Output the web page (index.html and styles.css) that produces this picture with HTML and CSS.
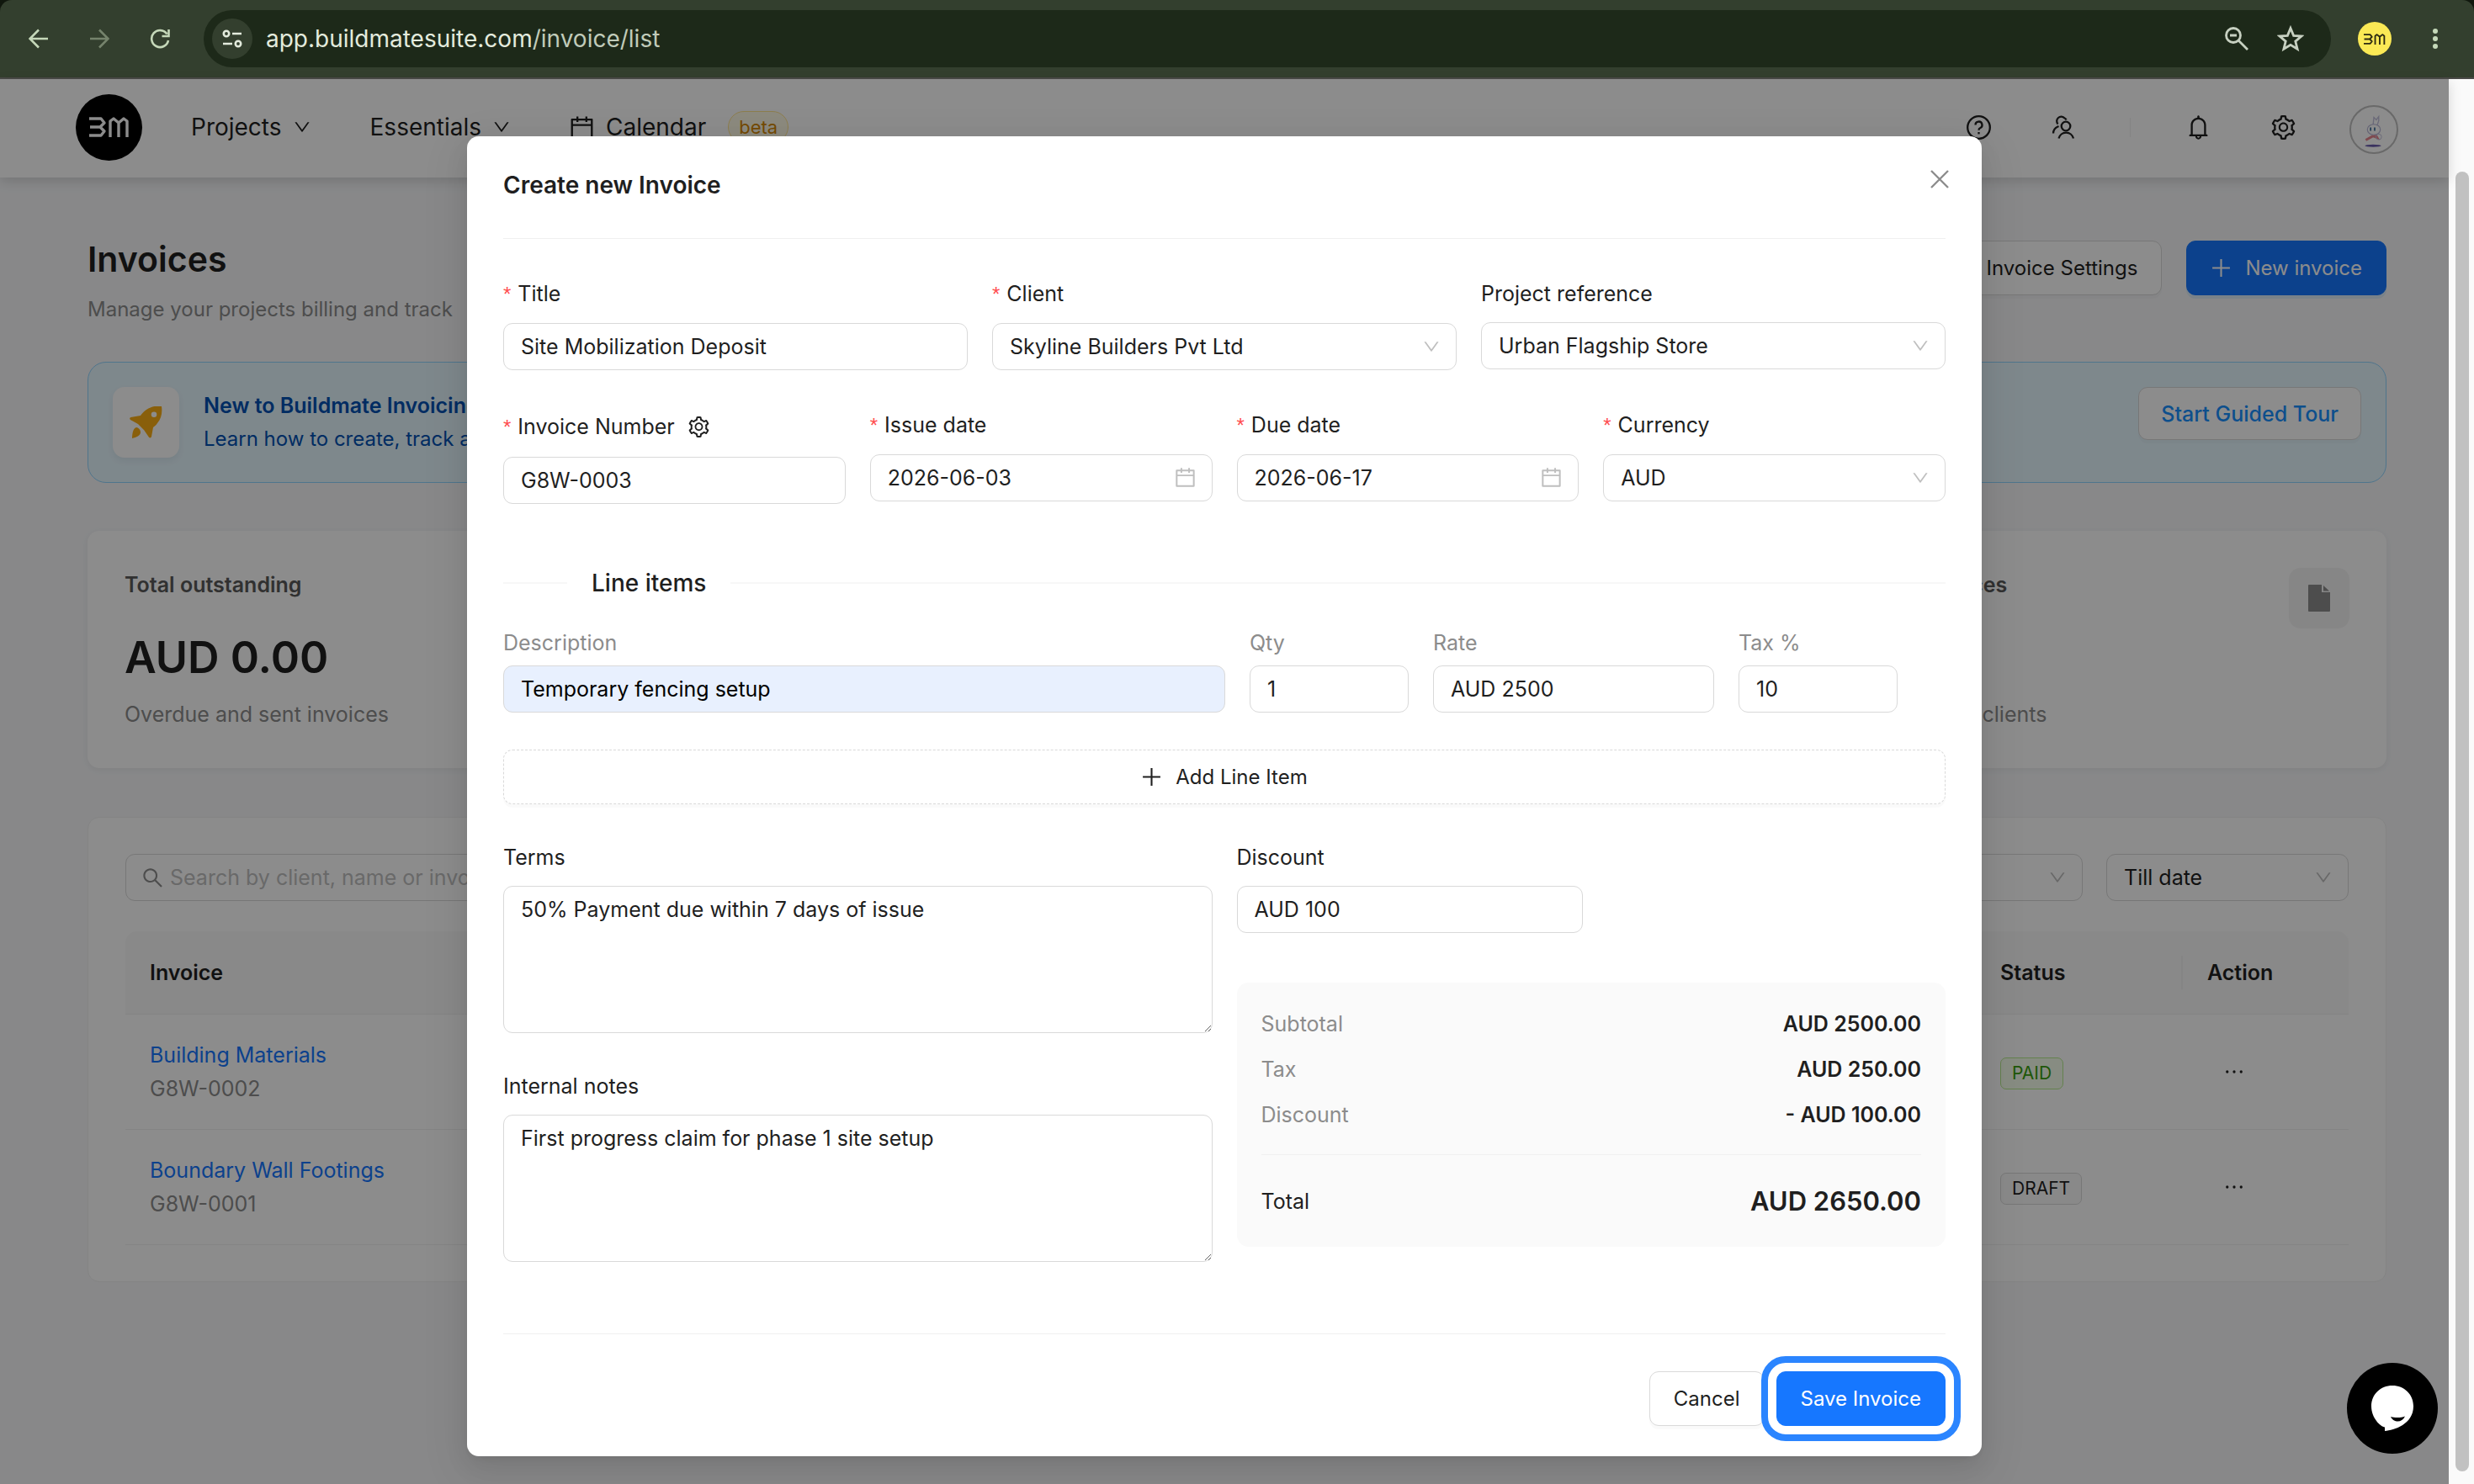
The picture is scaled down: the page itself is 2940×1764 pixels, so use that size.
FILE: index.html
```html
<!DOCTYPE html>
<html lang="en">
<head>
<meta charset="utf-8">
<meta name="viewport" content="width=device-width, initial-scale=1">
<title>Invoices - Buildmate</title>
<link rel="stylesheet" href="styles.css">
</head>
<body>
<svg class="sprite" aria-hidden="true">
  <defs>
    <symbol id="i-down" viewBox="64 64 896 896"><path d="M884 256h-75c-5.1 0-9.9 2.5-12.9 6.6L512 654.2 227.9 262.6c-3-4.1-7.8-6.6-12.9-6.6h-75c-6.5 0-10.3 7.4-6.5 12.7l352.6 486.1c12.8 17.6 39 17.6 51.7 0l352.6-486.1c3.9-5.3.1-12.7-6.4-12.7z"/></symbol>
    <symbol id="i-gear" viewBox="64 64 896 896"><path d="M924.8 625.7l-65.5-56c3.1-19 4.7-38.4 4.7-57.8s-1.6-38.8-4.7-57.8l65.5-56a32.03 32.03 0 009.3-35.2l-.9-2.6a443.74 443.74 0 00-79.7-137.9l-1.8-2.1a32.12 32.12 0 00-35.1-9.5l-81.3 28.9c-30-24.6-63.5-44-99.7-57.6l-15.7-85a32.05 32.05 0 00-25.8-25.7l-2.7-.5c-52.1-9.4-106.9-9.4-159 0l-2.7.5a32.05 32.05 0 00-25.8 25.7l-15.8 85.4a351.86 351.86 0 00-99 57.4l-81.9-29.1a32 32 0 00-35.1 9.5l-1.8 2.1a446.02 446.02 0 00-79.7 137.9l-.9 2.6c-4.5 12.5-.8 26.5 9.3 35.2l66.3 56.6c-3.1 18.8-4.6 38-4.6 57.1 0 19.2 1.5 38.4 4.6 57.1L99 625.5a32.03 32.03 0 00-9.3 35.2l.9 2.6c18.1 50.4 44.9 96.9 79.7 137.9l1.8 2.1a32.12 32.12 0 0035.1 9.5l81.9-29.1c29.8 24.5 63.1 43.9 99 57.4l15.8 85.4a32.05 32.05 0 0025.8 25.7l2.7.5a449.4 449.4 0 00159 0l2.7-.5a32.05 32.05 0 0025.8-25.7l15.7-85a350 350 0 0099.7-57.6l81.3 28.9a32 32 0 0035.1-9.5l1.8-2.1c34.8-41.1 61.6-87.5 79.7-137.9l.9-2.6c4.5-12.3.8-26.3-9.3-35zM788.3 465.9c2.5 15.1 3.8 30.6 3.8 46.1s-1.3 31-3.8 46.1l-6.6 40.1 74.7 63.9a370.03 370.03 0 01-42.6 73.6L721 702.8l-31.4 25.8c-23.9 19.6-50.5 35-79.3 45.8l-38.1 14.3-17.9 97a377.5 377.5 0 01-85 0l-17.9-97.2-37.8-14.5c-28.5-10.8-55-26.2-78.7-45.7l-31.4-25.9-93.4 33.2c-17-22.9-31.2-47.6-42.6-73.6l75.5-64.5-6.5-40c-2.4-14.9-3.7-30.3-3.7-45.5 0-15.3 1.2-30.6 3.7-45.5l6.5-40-75.5-64.5c11.3-26.1 25.6-50.7 42.6-73.6l93.4 33.2 31.4-25.9c23.7-19.5 50.2-34.9 78.7-45.7l37.9-14.3 17.9-97.2c28.1-3.2 56.8-3.2 85 0l17.9 97 38.1 14.3c28.7 10.8 55.4 26.2 79.3 45.8l31.4 25.8 92.8-32.9c17 22.9 31.2 47.6 42.6 73.6L781.8 426l6.5 39.9zM512 326c-97.2 0-176 78.8-176 176s78.8 176 176 176 176-78.8 176-176-78.8-176-176-176zm79.2 255.2A111.6 111.6 0 01512 614c-29.9 0-58-11.7-79.2-32.8A111.6 111.6 0 01400 502c0-29.9 11.7-58 32.8-79.2C454 401.6 482.1 390 512 390c29.9 0 58 11.6 79.2 32.8A111.6 111.6 0 01624 502c0 29.9-11.7 58-32.8 79.2z"/></symbol>
    <symbol id="i-calendar" viewBox="64 64 896 896"><path d="M880 184H712v-64c0-4.4-3.6-8-8-8h-56c-4.4 0-8 3.6-8 8v64H384v-64c0-4.4-3.6-8-8-8h-56c-4.4 0-8 3.6-8 8v64H144c-17.7 0-32 14.3-32 32v664c0 17.7 14.3 32 32 32h736c17.7 0 32-14.3 32-32V216c0-17.7-14.3-32-32-32zm-40 656H184V460h656v380zM184 392V256h128v48c0 4.4 3.6 8 8 8h56c4.4 0 8-3.6 8-8v-48h256v48c0 4.4 3.6 8 8 8h56c4.4 0 8-3.6 8-8v-48h128v136H184z"/></symbol>
    <symbol id="i-search" viewBox="64 64 896 896"><path d="M909.6 854.5L649.9 594.8C690.2 542.7 712 479 712 412c0-80.2-31.3-155.4-87.9-212.1-56.6-56.7-132-87.9-212.1-87.9s-155.5 31.3-212.1 87.9C143.2 256.5 112 331.8 112 412c0 80.1 31.3 155.5 87.9 212.1C256.5 680.8 331.8 712 412 712c67 0 130.6-21.8 182.7-62l259.7 259.6a8.2 8.2 0 0011.6 0l43.6-43.5a8.2 8.2 0 000-11.6zM570.4 570.4C528 612.7 471.8 636 412 636s-116-23.3-158.4-65.6C211.3 528 188 471.8 188 412s23.3-116.1 65.6-158.4C296 211.3 352.2 188 412 188s116.1 23.2 158.4 65.6S636 352.2 636 412s-23.3 116.1-65.6 158.4z"/></symbol>
    <symbol id="i-bell" viewBox="64 64 896 896"><path d="M816 768h-24V428c0-141.1-104.3-257.8-240-277.2V112c0-22.1-17.9-40-40-40s-40 17.9-40 40v38.8C336.3 170.2 232 286.9 232 428v340h-24c-17.7 0-32 14.3-32 32v32c0 4.4 3.6 8 8 8h216c0 61.8 50.2 112 112 112s112-50.2 112-112h216c4.4 0 8-3.6 8-8v-32c0-17.7-14.3-32-32-32zM512 888c-26.5 0-48-21.5-48-48h96c0 26.5-21.5 48-48 48zM304 768V428c0-55.6 21.6-107.8 60.9-147.1S456.4 220 512 220c55.6 0 107.8 21.6 147.1 60.9S720 372.4 720 428v340H304z"/></symbol>
    <symbol id="i-plus" viewBox="0 0 24 24"><path d="M11 2h2v20h-2zM2 11h20v2H2z"/></symbol>
    <symbol id="i-dots" viewBox="0 0 24 24"><circle cx="3" cy="12" r="1.8"/><circle cx="12" cy="12" r="1.8"/><circle cx="21" cy="12" r="1.8"/></symbol>
    <symbol id="i-mark" viewBox="0 0 48 24"><g fill="none" stroke="currentColor" stroke-width="3.4" stroke-linejoin="round"><path d="M0 2h14l4 5-5 5H1M13 12l5 5-4 5H0"/><path d="M25 24V5l4-3 6 5 6-5 4 3v19M35 7v17"/></g></symbol>
  </defs>
</svg>

<div class="browser">
  <header class="toolbar">
    <button class="tool" type="button" aria-label="Back"><svg class="tool-icon" viewBox="0 0 24 24"><path d="M23 12H2M12 1.500L1.500 12 12 22.500"/></svg></button>
    <button class="tool tool-off" type="button" aria-label="Forward"><svg class="tool-icon" viewBox="0 0 24 24"><path d="M1 12h21M12 1.500L22.500 12 12 22.500"/></svg></button>
    <button class="tool" type="button" aria-label="Reload"><svg class="tool-icon" viewBox="0 0 24 24"><path d="M20.500 6.500A10 10 0 1 0 22 14M22.500 1v8h-8"/></svg></button>
    <div class="address">
      <button class="site-info" type="button" aria-label="Site information"><svg class="tool-icon" viewBox="0 0 24 24"><circle cx="5" cy="6" r="3.200"/><path d="M12 6h11M1 18h11"/><circle cx="19" cy="18" r="3.200"/></svg></button>
      <span class="url">app.buildmatesuite.com<span class="url-path">/invoice/list</span></span>
      <button class="tool tool-pale" type="button" aria-label="Zoom"><svg class="zoom-icon" viewBox="0 0 28 28"><circle cx="10" cy="10" r="8.500"/><path d="M16 16l11 11M6 10h8"/></svg></button>
      <button class="tool tool-pale" type="button" aria-label="Bookmark"><svg class="star-icon" viewBox="0 0 32 32"><path d="M16 3.500l3.600 8.800 9.400.7-7.200 6.100 2.300 9.200L16 23.300l-8.100 5 2.300-9.200L3 13l9.400-.7z"/></svg></button>
    </div>
    <button class="profile" type="button" aria-label="Profile"><svg class="profile-mark"><use href="#i-mark"/></svg></button>
    <button class="tool" type="button" aria-label="Menu"><svg class="menu-icon" viewBox="0 0 8 24"><circle cx="4" cy="3" r="3"/><circle cx="4" cy="12" r="3"/><circle cx="4" cy="21" r="3"/></svg></button>
  </header>

  <div class="window">
    <div class="page">
      <header class="site-header">
        <a class="logo" href="#" aria-label="Buildmate"><svg class="logo-mark"><use href="#i-mark"/></svg></a>
        <nav class="nav">
          <a class="nav-link" href="#">Projects <svg class="nav-down"><use href="#i-down"/></svg></a>
          <a class="nav-link" href="#">Essentials <svg class="nav-down"><use href="#i-down"/></svg></a>
          <a class="nav-link" href="#"><svg class="nav-calendar"><use href="#i-calendar"/></svg> Calendar <span class="beta">beta</span></a>
        </nav>
        <div class="header-tools">
          <button class="header-button" type="button" aria-label="Help"><svg class="icon-29 stroked" viewBox="0 0 29 29"><circle cx="14.500" cy="14.500" r="13.300"/><path d="M10.500 11.500a4 4 0 1 1 5.500 3.700c-1.200.5-1.500 1-1.500 2.500"/><path d="M14.500 20v2.400"/></svg></button>
          <button class="header-button" type="button" aria-label="Contacts"><svg class="icon-29 stroked" viewBox="0 0 29 29"><circle cx="17" cy="13" r="5.300"/><path d="M8.500 27.500a9 9 0 0 1 17.500 0M15.500 3.500A5.300 5.300 0 1 0 7.500 10.500M7.500 13.500a9 9 0 0 0-5.500 8M8.500 13l-1 .5M15.500 3.500c1 .5 1.500 1 2 2"/></svg></button>
          <span class="header-rule"></span>
          <button class="header-button" type="button" aria-label="Notifications"><svg class="icon-29"><use href="#i-bell"/></svg></button>
          <button class="header-button" type="button" aria-label="Settings"><svg class="icon-29"><use href="#i-gear"/></svg></button>
          <button class="avatar" type="button" aria-label="Account"><svg class="avatar-art" viewBox="0 0 56 56"><path d="M27 23l1-10 3 3 3-4v5l-2 6" fill="#fff" stroke="#c3c1dc" stroke-width="1.400"/><path d="M18 41l9-5 5 2-3-5" fill="none" stroke="#e8868f" stroke-width="3"/><ellipse cx="28" cy="28" rx="8" ry="6.500" fill="#fff" stroke="#b9b7d6" stroke-width="1.200"/><circle cx="34" cy="37" r="3.500" fill="none" stroke="#c3c1dc"/><path d="M24 25.500v4M29 25.500v4" stroke="#41709c" stroke-width="1.800"/><ellipse cx="27" cy="48" rx="10" ry="1.500" fill="#6a5cae"/></svg></button>
        </div>
      </header>

      <main class="content">
        <div class="page-head">
          <div>
            <h1 class="page-title">Invoices</h1>
            <p class="page-note">Manage your projects billing and track</p>
          </div>
          <div class="page-actions">
            <button class="button" type="button">Invoice Settings</button>
            <button class="button primary" type="button"><svg class="icon-25"><use href="#i-plus"/></svg>New invoice</button>
          </div>
        </div>

        <section class="banner">
          <span class="banner-icon"><svg class="rocket" viewBox="0 0 39 39"><path fill-rule="evenodd" d="M38 0c1 7 0 14-5 20-2 3-4 4-5 5l-2 11c-.3 1.500-2 2-3 .8L17 28l-7-7-9-5c-1.200-.8-1-2.500.5-3L13 11c2-3 4-5 7-7 6-4 12-5 18-4zM29 6.500a3.300 3.300 0 1 0 0 6.600 3.300 3.300 0 0 0 0-6.600z"/><path d="M8 25c2 0 5 2.500 5 6s-5 6-10 7c0-5 1-12 5-13z"/></svg></span>
          <div class="banner-text">
            <strong class="banner-title">New to Buildmate Invoicing</strong>
            <span class="banner-note">Learn how to create, track and</span>
          </div>
          <button class="button tour" type="button">Start Guided Tour</button>
        </section>

        <section class="stats">
          <article class="stat">
            <div class="stat-head"><h2 class="stat-title">Total outstanding</h2></div>
            <p class="stat-value">AUD 0.00</p>
            <p class="stat-note">Overdue and sent invoices</p>
          </article>
          <article class="stat"></article>
          <article class="stat"></article>
          <article class="stat">
            <div class="stat-head"><h2 class="stat-title">Draft invoices</h2><span class="stat-icon"><svg class="doc" viewBox="0 0 26 32"><path d="M1 0h15v9h10v22a1 1 0 0 1-1 1H1a1 1 0 0 1-1-1V1a1 1 0 0 1 1-1zM18 1l7 6.500h-7z"/></svg></span></div>
            <p class="stat-value">1</p>
            <p class="stat-note">Not sent to clients</p>
          </article>
        </section>

        <section class="list">
          <div class="filters">
            <label class="search"><svg class="icon-25"><use href="#i-search"/></svg><input class="search-input" type="text" placeholder="Search by client, name or invoice number" aria-label="Search invoices"></label>
            <div class="filter-group">
              <div class="picker filter"><select class="field" aria-label="Status filter"><option>Status</option></select><svg class="picker-down"><use href="#i-down"/></svg></div>
              <div class="picker filter"><select class="field" aria-label="Date filter"><option>Till date</option></select><svg class="picker-down"><use href="#i-down"/></svg></div>
            </div>
          </div>
          <table class="table">
            <thead>
              <tr><th>Invoice</th><th class="col-status">Status</th><th class="col-action">Action</th></tr>
            </thead>
            <tbody>
              <tr>
                <td><a class="invoice-link" href="#">Building Materials</a><span class="invoice-id">G8W-0002</span></td>
                <td><span class="tag paid">PAID</span></td>
                <td><button class="more" type="button" aria-label="Actions"><svg class="dots"><use href="#i-dots"/></svg></button></td>
              </tr>
              <tr>
                <td><a class="invoice-link" href="#">Boundary Wall Footings</a><span class="invoice-id">G8W-0001</span></td>
                <td><span class="tag">DRAFT</span></td>
                <td><button class="more" type="button" aria-label="Actions"><svg class="dots"><use href="#i-dots"/></svg></button></td>
              </tr>
            </tbody>
          </table>
        </section>
      </main>

      <div class="mask">
        <form class="modal" role="dialog" aria-labelledby="modal-title">
          <h2 class="modal-title" id="modal-title">Create new Invoice</h2>
          <button class="close" type="button" aria-label="Close"><svg class="close-icon" viewBox="0 0 22 22"><path d="M1 1l20 20M21 1L1 21"/></svg></button>

          <div class="row thirds">
            <div class="item"><label class="label required" for="title">Title</label><input class="field" id="title" type="text" value="Site Mobilization Deposit"></div>
            <div class="item"><label class="label required" for="client">Client</label><div class="picker"><select class="field" id="client"><option>Skyline Builders Pvt Ltd</option></select><svg class="picker-down"><use href="#i-down"/></svg></div></div>
            <div class="item"><label class="label" for="project">Project reference</label><div class="picker"><select class="field" id="project"><option>Urban Flagship Store</option></select><svg class="picker-down"><use href="#i-down"/></svg></div></div>
          </div>

          <div class="row quarters">
            <div class="item"><div class="label-line"><label class="label required" for="number">Invoice Number</label><button class="label-button" type="button" aria-label="Number settings"><svg class="icon-25"><use href="#i-gear"/></svg></button></div><input class="field" id="number" type="text" value="G8W-0003"></div>
            <div class="item"><label class="label required" for="issue">Issue date</label><div class="picker"><input class="field" id="issue" type="text" value="2026-06-03"><svg class="picker-calendar"><use href="#i-calendar"/></svg></div></div>
            <div class="item"><label class="label required" for="due">Due date</label><div class="picker"><input class="field" id="due" type="text" value="2026-06-17"><svg class="picker-calendar"><use href="#i-calendar"/></svg></div></div>
            <div class="item"><label class="label required" for="currency">Currency</label><div class="picker"><select class="field" id="currency"><option>AUD</option></select><svg class="picker-down"><use href="#i-down"/></svg></div></div>
          </div>

          <h3 class="divider">Line items</h3>

          <div class="line-item">
            <div class="cell"><label class="label quiet" for="description">Description</label><input class="field filled" id="description" type="text" value="Temporary fencing setup"></div>
            <div class="cell"><label class="label quiet" for="qty">Qty</label><input class="field" id="qty" type="text" value="1"></div>
            <div class="cell"><label class="label quiet" for="rate">Rate</label><input class="field" id="rate" type="text" value="AUD 2500"></div>
            <div class="cell"><label class="label quiet" for="tax">Tax %</label><input class="field" id="tax" type="text" value="10"></div>
          </div>

          <button class="button add" type="button"><svg class="icon-25"><use href="#i-plus"/></svg>Add Line Item</button>

          <div class="halves">
            <div class="notes">
              <div class="item"><label class="label" for="terms">Terms</label><textarea class="field area" id="terms">50% Payment due within 7 days of issue</textarea></div>
              <div class="item"><label class="label" for="notes">Internal notes</label><textarea class="field area" id="notes">First progress claim for phase 1 site setup</textarea></div>
            </div>
            <div>
              <div class="item discount"><label class="label" for="discount">Discount</label><input class="field" id="discount" type="text" value="AUD 100"></div>
              <dl class="summary">
                <div class="sum"><dt>Subtotal</dt><dd>AUD 2500.00</dd></div>
                <div class="sum"><dt>Tax</dt><dd>AUD 250.00</dd></div>
                <div class="sum"><dt>Discount</dt><dd>- AUD 100.00</dd></div>
                <div class="sum total"><dt>Total</dt><dd>AUD 2650.00</dd></div>
              </dl>
            </div>
          </div>

          <footer class="modal-foot">
            <button class="button" type="button">Cancel</button>
            <button class="button primary save" type="submit">Save Invoice</button>
          </footer>
        </form>
      </div>

      <button class="chat" type="button" aria-label="Open chat"><svg class="chat-icon" viewBox="0 0 52 56"><path fill-rule="evenodd" d="M26 1C12 1 1 11.500 1 25.500S12 50 17 50.500V55c11-1 34-8 34-29.500C51 11.500 40 1 26 1zM24 38c5 1.500 12 1.500 17-.5-2 4-5 6-8.500 6S26 42 24 38z"/></svg></button>
    </div>
    <div class="scrollbar"><span class="thumb"></span></div>
  </div>
</div>
</body>
</html>
```
FILE: styles.css
```css
* {
  box-sizing: border-box;
}

html,
body {
  height: 100%;
}

body {
  margin: 0;
  background: #10170d;
  color: #1f1f1f;
  font: 25px/40px Inter, "Liberation Sans", sans-serif;
}

h1,
h2,
h3,
p,
dl,
dd {
  margin: 0;
}

button,
input,
select,
textarea {
  color: inherit;
  font: inherit;
}

button {
  padding: 0;
  border: 0;
  background: none;
}

a {
  color: inherit;
  text-decoration: none;
}

svg {
  display: block;
  flex: none;
  fill: currentColor;
}

.sprite {
  position: absolute;
  width: 0;
  height: 0;
}

.icon-25 {
  width: 25px;
  height: 25px;
}

.icon-29 {
  width: 29px;
  height: 29px;
}

.stroked {
  fill: none;
  stroke: currentColor;
  stroke-width: 2.3px;
}

/* Browser chrome */

.browser {
  display: flex;
  flex-direction: column;
  min-height: 100%;
}

.toolbar {
  display: flex;
  align-items: center;
  height: 94px;
  padding: 0 42px 0 34px;
  border-bottom: 2px solid #4a4a47;
  border-radius: 14px 14px 0 0;
  background: #333f2e;
  color: #c5d8b9;
}

.tool {
  margin-right: 48px;
}

.tool-off {
  color: #75836c;
}

.tool-icon {
  width: 24px;
  height: 24px;
  fill: none;
  stroke: currentColor;
  stroke-width: 2.6px;
}

.address {
  display: flex;
  flex: 1;
  align-items: center;
  height: 68px;
  margin: 0 32px 0 -8px;
  padding: 0 32px 0 10px;
  border-radius: 34px;
  background: #1d2919;
}

.site-info {
  display: grid;
  place-items: center;
  width: 48px;
  height: 48px;
  margin-right: 16px;
  border-radius: 50%;
  background: #333f2e;
  color: #e3ebdd;
}

.url {
  flex: 1;
  color: #e3ebdd;
  font-size: 28px;
}

.url-path {
  color: #c0cbb9;
}

.tool-pale {
  margin: 0 0 0 34px;
  color: #c7d0c1;
}

.zoom-icon {
  width: 28px;
  height: 28px;
  fill: none;
  stroke: currentColor;
  stroke-width: 2.8px;
}

.star-icon {
  width: 32px;
  height: 32px;
  fill: none;
  stroke: currentColor;
  stroke-width: 2.8px;
}

.profile {
  display: grid;
  place-items: center;
  width: 40px;
  height: 40px;
  margin-right: 48px;
  border-radius: 50%;
  background: #fbe955;
  color: #2c2a12;
}

.profile-mark {
  width: 26px;
  height: 13px;
}

.menu-icon {
  width: 8px;
  height: 24px;
}

.toolbar > .tool:last-child {
  margin: 0;
}

.window {
  display: flex;
  flex: 1;
}

.page {
  position: relative;
  flex: 1;
  min-width: 0;
  background: #f7f8fa;
}

.scrollbar {
  width: 30px;
  padding: 110px 6px 15px 8px;
  background: #fafafa;
}

.thumb {
  display: block;
  height: 100%;
  border-radius: 8px;
  background: #c1c1c1;
}

/* Site header */

.site-header {
  display: flex;
  align-items: center;
  height: 117px;
  padding: 0 60px 3px 90px;
  background: #fff;
  box-shadow: 0 4px 14px rgba(0, 0, 0, 0.15);
}

.logo {
  display: grid;
  place-items: center;
  width: 79px;
  height: 79px;
  margin-right: 58px;
  border-radius: 50%;
  background: #000;
  color: #fff;
}

.logo-mark {
  width: 48px;
  height: 24px;
}

.nav {
  display: flex;
  gap: 71px;
  font-size: 28px;
}

.nav-link {
  display: flex;
  align-items: center;
  gap: 14px;
}

.nav-down {
  width: 20px;
  height: 20px;
}

.nav-calendar {
  width: 29px;
  height: 29px;
}

.beta {
  height: 38px;
  margin-left: 12px;
  padding: 0 12px;
  border: 1px solid #ffe58f;
  border-radius: 19px;
  background: #fffbe6;
  color: #d48806;
  font-size: 22px;
  line-height: 36px;
}

.header-tools {
  display: flex;
  align-items: center;
  margin-left: auto;
}

.header-button {
  margin-right: 72px;
}

.header-rule {
  width: 1px;
  height: 23px;
  margin: 0 66px 0 -8px;
  background: #f0f0f0;
}

.avatar {
  width: 58px;
  height: 58px;
  margin: 6px 0 0 -8px;
  border: 2px solid #bfbfbf;
  border-radius: 50%;
  background: #fff;
}

.avatar-art {
  width: 54px;
  height: 54px;
}

/* Invoices page */

.content {
  padding: 69px 74px 200px 104px;
}

.page-head {
  display: flex;
  justify-content: space-between;
  margin-bottom: 42px;
}

.page-title {
  margin-bottom: 12px;
  font-size: 41px;
  font-weight: 600;
  line-height: 56px;
}

.page-note,
.stat-note,
.invoice-id {
  color: #8c8c8c;
}

.page-note {
  font-size: 24px;
}

.page-actions {
  display: flex;
  align-items: flex-start;
  gap: 29px;
  padding-top: 6px;
}

.button {
  display: flex;
  align-items: center;
  justify-content: center;
  gap: 16px;
  height: 65px;
  padding: 0 28px;
  border: 1px solid #d9d9d9;
  border-radius: 11px;
  background: #fff;
  box-shadow: 0 4px 0 rgba(0, 0, 0, 0.02);
  font-size: 24px;
  white-space: nowrap;
}

.primary {
  border-color: #1677ff;
  background: #1677ff;
  box-shadow: 0 4px 0 rgba(5, 145, 255, 0.1);
  color: #fff;
}

.banner {
  display: flex;
  align-items: flex-start;
  gap: 29px;
  margin-bottom: 57px;
  padding: 29px;
  border: 1px solid #91d5ff;
  border-radius: 22px;
  background: #e6f7ff;
  color: #0050b3;
}

.banner-icon {
  display: grid;
  place-items: center;
  width: 79px;
  height: 84px;
  border-radius: 14px;
  background: #fff;
  box-shadow: 0 4px 8px rgba(0, 0, 0, 0.06);
  color: #faad14;
}

.rocket {
  width: 39px;
  height: 39px;
}

.banner-text {
  display: flex;
  flex: 1;
  flex-direction: column;
  padding-top: 2px;
}

.banner-title {
  font-weight: 600;
}

.banner-note {
  font-size: 24px;
}

.tour {
  height: 63px;
  padding: 0 26px;
  color: #1890ff;
  font-size: 25px;
  font-weight: 500;
}

.stats {
  display: grid;
  grid-template-columns: repeat(4, 1fr);
  gap: 29px;
  margin-bottom: 58px;
}

.stat {
  min-height: 281px;
  padding: 44px;
  border-radius: 14px;
  background: #fff;
  box-shadow: 0 2px 8px rgba(0, 0, 0, 0.06);
}

.stat-head {
  display: flex;
  justify-content: space-between;
  height: 74px;
}

.stat-title {
  color: #595959;
  font-size: 25px;
  font-weight: 600;
}

.stat-icon {
  display: grid;
  place-items: center;
  width: 72px;
  height: 72px;
  border-radius: 14px;
  background: #f5f5f5;
  color: #8c8c8c;
}

.doc {
  width: 26px;
  height: 32px;
}

.stat-value {
  margin-bottom: 15px;
  font-size: 52px;
  font-weight: 600;
  line-height: 65px;
}

.list {
  padding: 43px 44px;
  border: 1px solid #f0f0f0;
  border-radius: 14px;
  background: #fff;
}

.filters {
  display: flex;
  justify-content: space-between;
  margin-bottom: 36px;
}

.search {
  display: flex;
  align-items: center;
  gap: 8px;
  width: 720px;
  height: 56px;
  padding: 0 19px;
  border: 1px solid #d9d9d9;
  border-radius: 11px;
  color: #8c8c8c;
}

.search-input {
  flex: 1;
  padding: 0;
  border: 0;
  outline: 0;
  background: none;
}

.search-input::placeholder {
  color: #bfbfbf;
}

.filter-group {
  display: flex;
  gap: 28px;
}

.filter {
  width: 288px;
}

.table {
  width: 100%;
  border-collapse: separate;
  border-spacing: 0;
}

.table th,
.table td {
  padding: 28px 29px;
  border-bottom: 1px solid #f0f0f0;
  text-align: left;
}

.table th {
  position: relative;
  padding: 29px;
  background: #fafafa;
  font-weight: 600;
}

.table th:first-child {
  border-top-left-radius: 14px;
}

.table th:last-child {
  border-top-right-radius: 14px;
}

.col-status {
  width: 246px;
}

.col-status::after {
  position: absolute;
  top: 29px;
  right: 0;
  width: 2px;
  height: 40px;
  background: #f0f0f0;
  content: "";
}

.col-action {
  width: 197px;
}

.invoice-link,
.invoice-id {
  display: block;
}

.invoice-link {
  color: #1677ff;
}

.tag {
  display: inline-block;
  padding: 0 13px;
  border: 1px solid #d9d9d9;
  border-radius: 7px;
  background: #fafafa;
  font-size: 21px;
  line-height: 36px;
}

.paid {
  border-color: #b7eb8f;
  background: #f6ffed;
  color: #389e0d;
}

.more {
  display: grid;
  place-items: center;
  width: 64px;
  height: 57px;
}

.dots {
  width: 22px;
  height: 22px;
}

/* Dialog */

.mask {
  position: absolute;
  inset: 0;
  padding: 68px 0 34px;
  background: rgba(0, 0, 0, 0.45);
}

.modal {
  position: relative;
  width: 1800px;
  max-width: 100%;
  margin: 0 auto;
  padding: 36px 43px;
  border-radius: 14px;
  background: #fff;
  box-shadow: 0 11px 29px rgba(0, 0, 0, 0.08), 0 5px 11px -7px rgba(0, 0, 0, 0.12), 0 16px 50px 14px rgba(0, 0, 0, 0.05);
}

.modal-title {
  padding-bottom: 41px;
  border-bottom: 1px solid #f0f0f0;
  font-size: 28px;
  font-weight: 600;
  line-height: 44px;
}

.close {
  position: absolute;
  top: 29px;
  right: 29px;
  display: grid;
  place-items: center;
  width: 43px;
  height: 43px;
  color: #8c8c8c;
}

.close-icon {
  width: 22px;
  height: 22px;
  stroke: currentColor;
  stroke-width: 2.4px;
}

.row {
  display: grid;
  gap: 29px;
  margin-top: 45px;
}

.thirds {
  grid-template-columns: repeat(3, 1fr);
}

.quarters {
  grid-template-columns: repeat(4, 1fr);
}

.item {
  display: flex;
  flex-direction: column;
  gap: 14px;
}

.label-line {
  display: flex;
  align-items: center;
  gap: 16px;
  height: 44px;
}

.required::before {
  margin-right: 8px;
  color: #ff4d4f;
  content: "*";
  font-family: "Liberation Sans", sans-serif;
  font-size: 24px;
}

.quiet {
  color: #8c8c8c;
}

.field {
  display: block;
  width: 100%;
  height: 56px;
  padding: 0 20px;
  border: 1px solid #d9d9d9;
  border-radius: 11px;
  background: #fff;
  appearance: none;
}

.filled {
  background: #e8f0fe;
  color: #000;
}

.picker {
  position: relative;
}

.picker-down,
.picker-calendar {
  position: absolute;
  top: 18px;
  right: 20px;
  width: 20px;
  height: 20px;
  color: #bfbfbf;
  pointer-events: none;
}

.picker-calendar {
  top: 15px;
  width: 25px;
  height: 25px;
}

.divider {
  display: flex;
  align-items: center;
  gap: 29px;
  margin-top: 72px;
  font-size: 28px;
  font-weight: 500;
  line-height: 44px;
}

.divider::before,
.divider::after {
  height: 2px;
  background: #f7f7f7;
  content: "";
}

.divider::before {
  width: 76px;
}

.divider::after {
  flex: 1;
}

.line-item {
  display: grid;
  grid-template-columns: 858fr 189fr 334fr 189fr 28fr;
  gap: 29px;
  margin-top: 29px;
}

.cell {
  display: flex;
  flex-direction: column;
  gap: 7px;
}

.add {
  width: 100%;
  margin: 44px 0 43px;
  border-style: dashed;
}

.halves {
  display: grid;
  grid-template-columns: repeat(2, 1fr);
  gap: 29px;
}

.notes {
  display: flex;
  flex-direction: column;
  gap: 43px;
}

.area {
  height: 175px;
  padding: 7px 20px;
  resize: vertical;
}

.discount {
  width: 411px;
}

.summary {
  display: flex;
  flex-direction: column;
  gap: 14px;
  margin-top: 59px;
  padding: 29px;
  border-radius: 14px;
  background: #fafafa;
}

.sum {
  display: flex;
  align-items: center;
  justify-content: space-between;
}

.sum dt {
  color: #8c8c8c;
}

.sum dd {
  font-weight: 600;
}

.total {
  margin-top: 13px;
  padding-top: 30px;
  border-top: 1px solid #f0f0f0;
  line-height: 50px;
}

.sum.total dt {
  color: inherit;
}

.total dd {
  font-size: 31px;
}

.modal-foot {
  display: flex;
  justify-content: flex-end;
  gap: 14px;
  margin-top: 85px;
  padding-top: 44px;
  border-top: 1px solid #f0f0f0;
}

.save {
  outline: 8px solid #2b85ff;
  outline-offset: 10px;
  box-shadow: 0 0 0 10px #fff;
}

/* Chat launcher */

.chat {
  position: absolute;
  right: 13px;
  bottom: 36px;
  display: grid;
  place-items: center;
  width: 108px;
  height: 108px;
  border-radius: 50%;
  background: #000;
  color: #fff;
}

.chat-icon {
  width: 52px;
  height: 56px;
}
```
